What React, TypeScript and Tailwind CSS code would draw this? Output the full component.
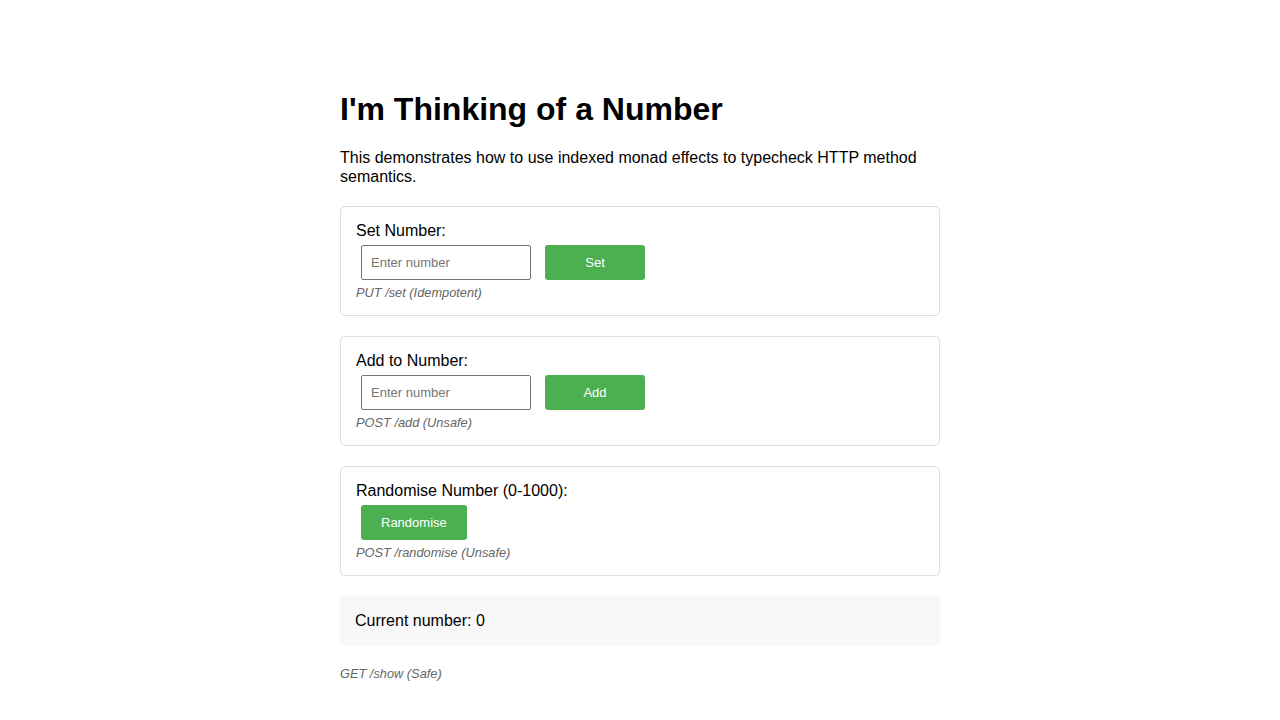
import React from "react";

const font = { fontFamily: '"Liberation Sans", Arial, Helvetica, sans-serif' };

function Card({ label, children, hint }: { label: string; children: React.ReactNode; hint: string }) {
  return (
    <div className="mt-[20px] rounded-[5px] border border-[#dddddd] p-[15px]">
      <div className="text-[16px] leading-[18px] text-black">{label}</div>
      <div className="flex items-center">{children}</div>
      <div className="text-[12.8px] leading-[15px] italic text-[#666666]">{hint}</div>
    </div>
  );
}

function Input() {
  return (
    <input
      type="text"
      placeholder="Enter number"
      className="m-[5px] h-[35px] w-[170px] rounded-[2px] border border-[#767676] px-[9px] text-[13px] text-black placeholder:text-[#757575] outline-none"
      style={font}
    />
  );
}

function Btn({ children, wide }: { children: React.ReactNode; wide?: boolean }) {
  return (
    <button
      className={
        wide
          ? "my-[5px] ml-[9px] mr-[5px] h-[35px] w-[100px] rounded-[3px] bg-[#4caf50] text-[13px] text-white"
          : "m-[5px] h-[35px] px-[20px] rounded-[3px] bg-[#4caf50] text-[13px] text-white"
      }
      style={font}
    >
      {children}
    </button>
  );
}

export default function App() {
  return (
    <div className="min-h-[720px] bg-white text-black" style={font}>
      <div className="mx-auto w-[600px] pt-[91px]">
        <h1 className="text-[32px] font-bold leading-[37px]">I'm Thinking of a Number</h1>
        <p className="mt-[21px] text-[16px] leading-[18.5px]">
          This demonstrates how to use indexed monad effects to typecheck HTTP method semantics.
        </p>
        <Card label="Set Number:" hint="PUT /set (Idempotent)">
          <Input />
          <Btn wide>Set</Btn>
        </Card>
        <Card label="Add to Number:" hint="POST /add (Unsafe)">
          <Input />
          <Btn wide>Add</Btn>
        </Card>
        <Card label="Randomise Number (0-1000):" hint="POST /randomise (Unsafe)">
          <Btn>Randomise</Btn>
        </Card>
        <div className="mt-[20px] rounded-[5px] bg-[#f8f8f8] px-[15px] py-[15px] text-[16px] leading-[20px]">
          Current number: 0
        </div>
        <div className="mt-[20px] text-[12.8px] leading-[15px] italic text-[#666666]">GET /show (Safe)</div>
      </div>
    </div>
  );
}
